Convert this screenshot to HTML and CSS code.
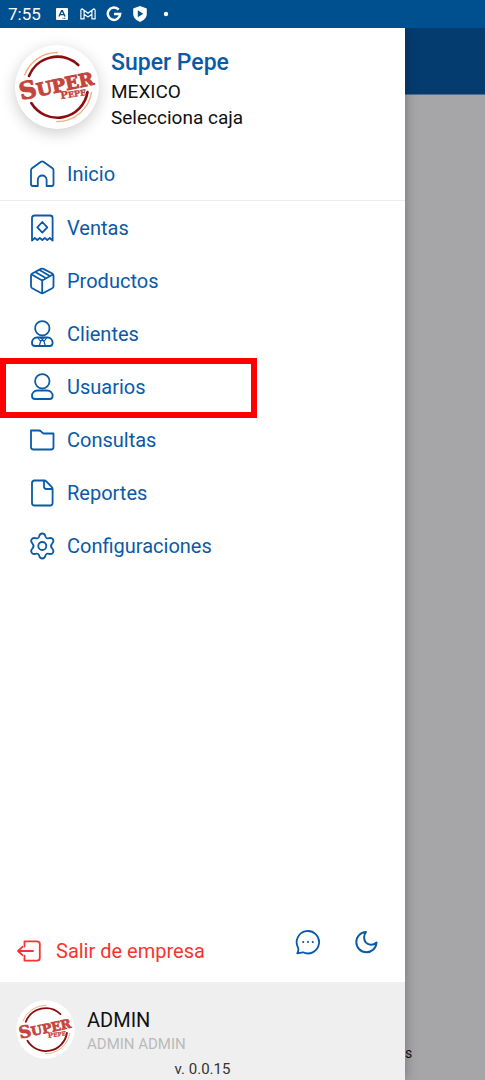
FILE: index.html
```html
<!DOCTYPE html>
<html lang="es">
<head>
<meta charset="utf-8">
<meta name="viewport" content="width=device-width, initial-scale=1">
<title>Super Pepe</title>
<link rel="stylesheet" href="styles.css">
</head>
<body>
<header class="status">
  <span class="clock">7:55</span>
  <svg width="16" height="14" viewBox="0 0 16 14"><rect x="2" y="1" width="12" height="12" rx="1" fill="#fff"/><path d="M5 9.500L7.600 3.600h.8L11 9.500M6 7.600h4" fill="none" stroke="#00508f" stroke-width="1.400"/><path d="M8.500 11.300h3.500" stroke="#00508f" stroke-dasharray="1 .6"/></svg>
  <svg width="16" height="14" viewBox="0 0 18 14"><path d="M1 12.500V2.800Q1.200 1.200 2.600 1.300L9 6.200l6.400-4.900Q16.800 1.200 17 2.800v9.700h-3.600V7.200L9 10.400 4.600 7.200v5.300zM4.600 7.200V3M13.400 7.200V3" fill="none" stroke="#fff" stroke-width="1.300" stroke-linejoin="round"/></svg>
  <svg width="16" height="16" viewBox="0 0 16 16"><path d="M12.700 3.600A6.200 6.200 0 1 0 14.200 8H8" fill="none" stroke="#fff" stroke-width="2.500"/></svg>
  <svg width="16" height="18" viewBox="0 0 16 18"><path d="M8 1l6.800 2.600v5.200c0 4-3 6.700-6.800 8.200-3.800-1.500-6.800-4.200-6.800-8.200V3.600z" fill="#fff"/><path d="M5.800 5.200v7L11.200 8.700z" fill="#00508f"/></svg>
  <svg width="16" height="6" viewBox="0 0 16 6"><circle cx="8" cy="3" r="2.200" fill="#fff"/></svg>
</header>

<div class="shell">
  <aside class="drawer">
    <section class="company">
      <svg class="logo company-logo" viewBox="0 0 84 84" role="img" aria-label="Logo Super Pepe">
        <circle cx="42" cy="42" r="41.500" fill="#fff"/>
        <path class="ring" d="M14 31A30.500 30.500 0 0 1 63.300 20M16.300 58A30.500 30.500 0 0 0 72.500 47"/>
        <path class="ring-outer" d="M9.700 30A34.700 34.700 0 0 1 42.500 7.500M41.800 76.600A34.700 34.700 0 0 0 76.500 47.500"/>
        <text transform="translate(6 55) rotate(-12)"><tspan class="logo-s">S</tspan><tspan class="logo-uper">UPER</tspan></text>
        <text transform="translate(46 54) rotate(-9)"><tspan class="logo-p">P</tspan><tspan class="logo-epe">EPE</tspan></text>
      </svg>
      <div class="company-text">
        <h1 class="company-name">Super Pepe</h1>
        <p class="company-line">MEXICO</p>
        <p class="company-line">Selecciona caja</p>
      </div>
    </section>

    <nav class="menu">
      <a class="item first" href="#inicio"><svg class="icon" viewBox="0 0 28 28"><path d="M3 10.300Q3 9 4 8.200L13 1.800Q14.200 1 15.400 1.800L24.500 8.200q1 .8 1 2.100V24q0 2-2 2H18.600V20c0-6-8.800-6-8.800 0v6H5q-2 0-2-2z"/></svg>Inicio</a>
      <a class="item" href="#ventas"><svg class="icon" viewBox="0 0 28 28"><path d="M4 26.600V4Q4 1.500 6.500 1.500h15.500Q24.600 1.500 24.600 4V26.600L21.800 24l-2.500 2-2.500-2-2.500 2-2.500-2-2.500 2L6.800 24z"/><path d="M14.300 8l5 5.300-5 5.300-5-5.300z"/></svg>Ventas</a>
      <a class="item" href="#productos"><svg class="icon" viewBox="0 0 28 28"><path d="M13 1.900Q14.200 1.300 15.400 1.900L24.300 6.500q1.200.7 1.200 2V19.200q0 1.300-1.200 2L15.400 26q-1.200.6-2.400 0L4.200 21.200Q3 20.500 3 19.200V8.500q0-1.300 1.200-2zM3.600 7.500l10.600 6 10.700-6M14.200 13.500V26.300M7.300 5l9.500 5.500v1.500M11.500 3l9.500 5.500"/></svg>Productos</a>
      <a class="item" href="#clientes"><svg class="icon" viewBox="0 0 28 28"><circle cx="14.300" cy="8.300" r="7.200"/><path d="M9 17.500h10.600c3 0 5 2.500 5 5.500 0 2-1 3-3 3H7c-2 0-3-1-3-3 0-3 2-5.500 5-5.500z"/><path class="fine" d="M9.800 17.500l2.800 4-1.400 4.500M18.800 17.500l-2.800 4 1.400 4.500M12.600 21.500l1.700-2 1.700 2M12.300 17.500l2 2 2-2"/></svg>Clientes</a>
      <a class="item marked" href="#usuarios"><svg class="icon" viewBox="0 0 28 28"><circle cx="14.300" cy="8.300" r="7.200"/><path d="M9.500 17.500h9.600c3.300 0 5.500 2.500 5.500 5.500 0 2-1 3-3 3H7c-2 0-3-1-3-3 0-3 2.200-5.500 5.500-5.500z"/></svg>Usuarios</a>
      <a class="item" href="#consultas"><svg class="icon" viewBox="0 0 28 28"><path d="M3 4.500h8q1.300 0 2 .8l1.500 1.500q.6.700 1.800.7H25.500V21q0 2.500-2.500 2.500H5.500Q3 23.500 3 21z"/></svg>Consultas</a>
      <a class="item" href="#reportes"><svg class="icon" viewBox="0 0 28 28"><path d="M6.500 1.500h10q1 0 1.800.8l5.500 5.800q.8.900.8 2V24q0 2.500-2.500 2.500H6.500Q4 26.500 4 24V4Q4 1.500 6.500 1.500zM16 1.800V7.500q0 2.500 2.500 2.500h5.800"/></svg>Reportes</a>
      <a class="item" href="#configuraciones"><svg class="icon" viewBox="0 0 28 28"><circle cx="14.300" cy="14" r="4"/><path d="M11.200 4.300C11.700 2.300 12.600 1.500 14.300 1.500S16.900 2.300 17.400 4.300C18 6.300 19.300 6.800 21.200 6.200C23.100 5.700 24.200 6 25 7.400S25.600 10 24.200 11.500C22.600 13.200 22.600 14.800 24.200 16.500C25.600 18 25.800 19.200 25 20.600S23.100 22.300 21.200 21.800C19.300 21.200 18 21.700 17.400 23.700C16.900 25.700 16 26.500 14.300 26.500S11.700 25.700 11.200 23.700C10.600 21.700 9.300 21.200 7.400 21.800C5.500 22.300 4.400 22 3.600 20.600S3 18 4.400 16.500C6 14.800 6 13.200 4.400 11.500C3 10 2.800 8.800 3.600 7.400S5.500 5.700 7.400 6.200C9.300 6.800 10.600 6.300 11.200 4.300z"/></svg>Configuraciones</a>
    </nav>

    <div class="actions">
      <a class="leave" href="#salir"><svg width="26" height="24" viewBox="0 0 26 24"><path d="M8.500 7.500V2.300H21q2.800 0 2.800 2.700v14q0 2.700-2.800 2.700H8.500v-5M17 12H2M6.500 7.800L2 12l4.500 4.200"/></svg>Salir de empresa</a>
      <button class="tool" type="button" aria-label="Chat"><svg width="26" height="26" viewBox="0 0 26 26"><path d="M3 18.500A11.200 11.200 0 1 1 8 23.300L2.300 24.300Q4 21.500 3 18.500z"/><path class="dots" d="M8.200 13h.01M13 13h.01M17.800 13h.01"/></svg></button>
      <button class="tool" type="button" aria-label="Modo oscuro"><svg width="26" height="26" viewBox="0 0 26 26"><path class="moon" d="M13 3A10.100 10.100 0 1 0 23.500 13.500C20 16.800 15.600 16.200 13 13.600C10.500 10.800 10.400 6.300 13 3z"/></svg></button>
    </div>

    <footer class="account">
      <div class="account-row">
        <svg class="logo account-logo" viewBox="0 0 84 84" role="img" aria-label="Logo Super Pepe">
          <circle cx="42" cy="42" r="41.500" fill="#fff"/>
          <path class="ring" d="M14 31A30.500 30.500 0 0 1 63.300 20M16.300 58A30.500 30.500 0 0 0 72.500 47"/>
          <path class="ring-outer" d="M9.700 30A34.700 34.700 0 0 1 42.500 7.500M41.800 76.600A34.700 34.700 0 0 0 76.500 47.500"/>
          <text transform="translate(6 55) rotate(-12)"><tspan class="logo-s">S</tspan><tspan class="logo-uper">UPER</tspan></text>
          <text transform="translate(46 54) rotate(-9)"><tspan class="logo-p">P</tspan><tspan class="logo-epe">EPE</tspan></text>
        </svg>
        <div>
          <p class="user">ADMIN</p>
          <p class="fullname">ADMIN ADMIN</p>
        </div>
      </div>
      <p class="version">v. 0.0.15</p>
    </footer>
  </aside>
  <main class="behind">
    <div class="appbar"></div>
    <div class="content">s</div>
  </main>
</div>
</body>
</html>
```
FILE: styles.css
```css
*, *::after { box-sizing: border-box; }

body {
  margin: 0;
  min-height: 100vh;
  display: flex;
  flex-direction: column;
  font-family: Roboto, "Liberation Sans", sans-serif;
  color: #111;
  background: #fff;
}

h1, p { margin: 0; font-weight: 400; }
a { text-decoration: none; }
svg { display: block; flex: none; }

.logo {
  overflow: visible;
  font-family: "DejaVu Serif", serif;
  font-weight: 700;
}
.logo text { fill: #c4453c; stroke: #c4453c; stroke-width: 1; }
.ring, .ring-outer { fill: none; stroke-linecap: round; }
.ring { stroke: #8b0d10; stroke-width: 2.6; }
.ring-outer { stroke: #f0b07c; stroke-width: 1.4; }
.logo-s { font-size: 24px; }
.logo-uper { font-size: 18px; }
.logo .logo-p { font-size: 10px; stroke-width: .4; }
.logo .logo-epe { font-size: 8px; stroke-width: .4; }

.status {
  display: flex;
  align-items: center;
  gap: 10px;
  height: 28px;
  padding: 0 8px;
  background: #00508f;
  color: #fff;
}
.clock { font-size: 17px; line-height: 28px; margin-right: 3px; }

.shell { flex: 1; display: flex; }

.drawer {
  flex: 0 1 405px;
  display: flex;
  flex-direction: column;
  background: #fff;
  position: relative;
  box-shadow: 0 0 12px rgba(0, 0, 0, .3);
  clip-path: inset(0 -30px 0 0);
}

.company {
  display: flex;
  align-items: flex-start;
  gap: 12px;
  padding: 17px 15px 16px;
}
.company-logo {
  width: 84px;
  height: 84px;
  border-radius: 50%;
  box-shadow: 0 4px 16px rgba(0, 0, 0, .2);
}
.company-text { padding-top: 2px; }
.company-name { font-size: 23px; font-weight: 500; line-height: 32px; color: #0a5aa8; }
.company-line { font-size: 19px; line-height: 26px; }

.menu { display: flex; flex-direction: column; }
.item {
  display: flex;
  align-items: center;
  gap: 11px;
  height: 53px;
  padding-left: 28px;
  font-size: 20px;
  color: #0a5aa8;
  position: relative;
}
.first { height: 54px; border-bottom: 1px solid #ececec; }
.icon, .actions svg {
  fill: none;
  stroke: currentColor;
  stroke-width: 1.8;
  stroke-linejoin: round;
  stroke-linecap: round;
}
.icon { width: 28px; height: 28px; }
.icon .fine { stroke-width: 1.2; }

.marked::after {
  content: "";
  position: absolute;
  top: -2px;
  left: 0;
  width: 257px;
  height: 60px;
  border: 6px solid #f00;
}

.actions {
  display: flex;
  align-items: flex-start;
  margin-top: auto;
  padding: 0 26px 18px 16px;
}
.leave {
  display: flex;
  align-items: center;
  gap: 14px;
  margin-right: auto;
  padding-top: 9px;
  font-size: 20px;
  line-height: 26px;
  color: #f4352f;
}
.tool {
  padding: 0;
  margin-left: 32px;
  border: 0;
  background: none;
  color: #0a5aa8;
}
.actions .dots { stroke-width: 2.2; }
.actions .moon { stroke-width: 2; }

.account { background: #efefef; padding: 18px 16px 0; }
.account-row { display: flex; gap: 12px; }
.account-logo { width: 59px; height: 59px; }
.user { font-size: 20px; line-height: 26px; padding-top: 7px; }
.fullname { font-size: 15px; line-height: 22px; color: #bababa; }
.version { font-size: 15px; line-height: 21px; text-align: center; color: #333; }

.behind {
  flex: 1;
  display: flex;
  flex-direction: column;
  min-width: 0;
  background: #a6a6a8;
}
.appbar { height: 67px; background: #043c70; border-bottom: 1px solid #4d6f91; }
.content {
  flex: 1;
  display: flex;
  align-items: flex-end;
  padding-bottom: 17px;
  font-size: 14px;
  line-height: 20px;
}
```
